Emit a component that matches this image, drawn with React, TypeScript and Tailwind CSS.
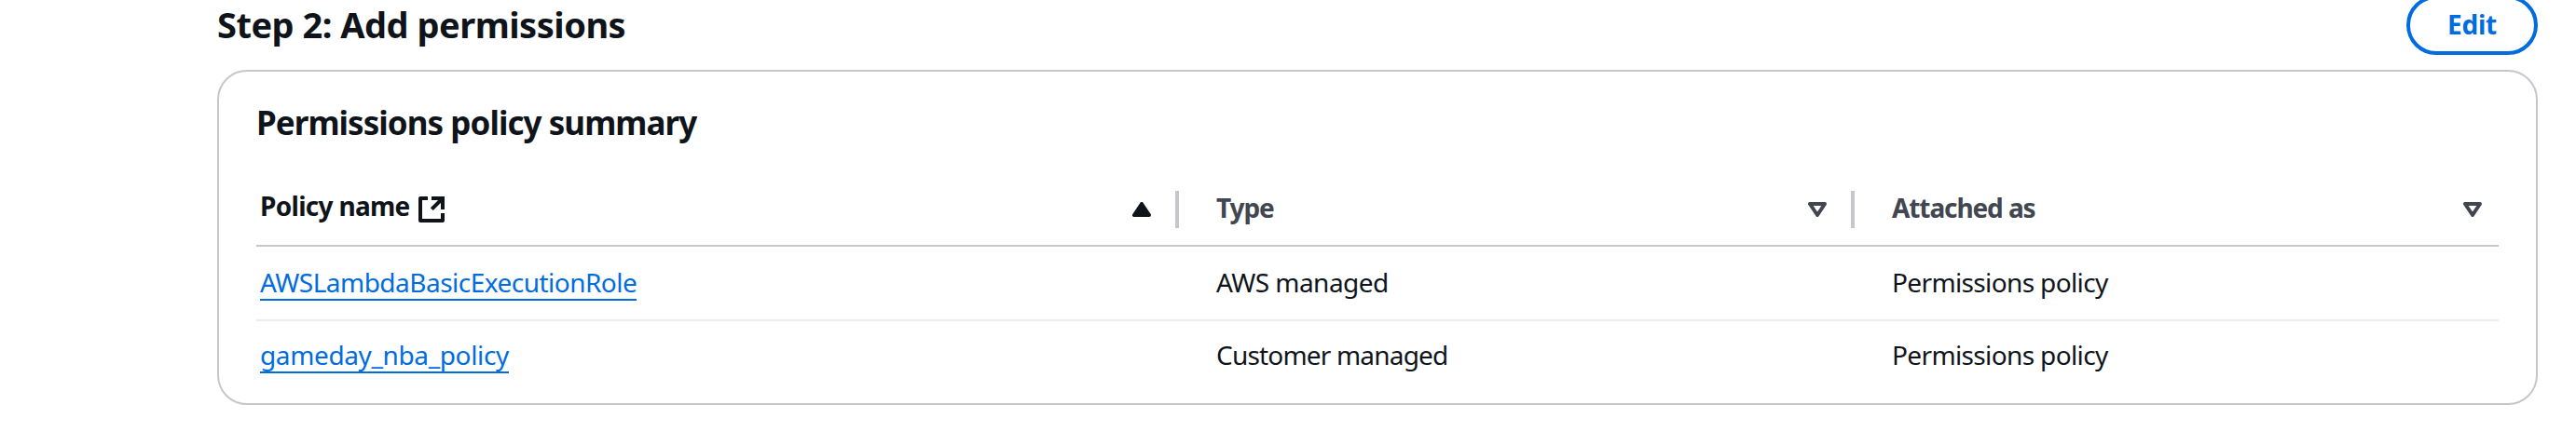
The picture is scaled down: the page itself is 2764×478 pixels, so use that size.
const rows = [
  { name: "AWSLambdaBasicExecutionRole", nameTracking: "tracking-[-0.515px]", type: "AWS managed", typeTracking: "tracking-[-0.54px]", attached: "Permissions policy", rowClass: "h-[80px] pt-[18px] border-b-2 border-[#ebebf0]" },
  { name: "gameday_nba_policy", nameTracking: "tracking-[-0.37px]", type: "Customer managed", typeTracking: "tracking-[-0.81px]", attached: "Permissions policy", rowClass: "h-[88px] pt-[16px]" },
];

function ExternalIcon() {
  return (
    <svg className="mt-[10px] ml-[10px] h-[28px] w-[28px] shrink-0" viewBox="0 0 28 28" fill="none" stroke="#0f141a" strokeWidth="4">
      <path d="M10 2H2v24h24v-8" strokeLinejoin="round" />
      <path d="M14 2h12v12" />
      <path d="M26 2 14.3 13.7" />
    </svg>
  );
}

function SortIcon({ active = false }: { active?: boolean }) {
  return (
    <svg
      className="mt-[16px] ml-auto h-[16px] w-[20px] shrink-0"
      viewBox="0 0 20 16"
      fill={active ? "#0f141a" : "none"}
      stroke={active ? "#0f141a" : "#424650"}
      strokeWidth="4"
      strokeLinejoin="round"
    >
      <path d={active ? "M2 14h16L10 2z" : "M2 2h16l-8 12z"} />
    </svg>
  );
}

function Divider() {
  return <div className="mt-[4px] ml-[26px] h-[40px] w-[4px] shrink-0 bg-[#c6c6cd]" />;
}

export default function App() {
  return (
    <div className="h-[478px] w-[2764px] overflow-hidden bg-white pr-[41px] pl-[233px] font-['Noto_Sans',sans-serif] text-[28px] leading-[40px] text-[#0f141a]">
      <header className="flex h-[59px] items-start justify-between">
        <h1 className="pt-[2px] text-[38px] leading-[48px] font-bold tracking-[-0.5px]">Step 2: Add permissions</h1>
        <button className="-mt-[5px] flex h-[64px] w-[141px] items-center justify-center rounded-full border-4 border-[#006ce0] pb-[2px] font-bold tracking-[-0.2px] text-[#006ce0]">
          Edit
        </button>
      </header>
      <section className="mt-[16px] h-[360px] rounded-[32px] border-2 border-[#c6c6cd] px-[40px] pt-[33px]">
        <h2 className="text-[35px] leading-[44px] font-bold tracking-[-0.95px]">Permissions policy summary</h2>
        <div className="mt-[47px] grid h-[64px] grid-cols-[990px_725px_691px] border-b-2 border-[#c6c6cd] font-bold text-[#424650]">
          <div className="flex items-start pl-[4px] text-[#0f141a]">
            <span className="w-[160px] tracking-[-0.7px] whitespace-nowrap">Policy name</span>
            <ExternalIcon />
            <SortIcon active />
            <Divider />
          </div>
          <div className="flex items-start pl-[40px]">
            <span className="pt-[2px] tracking-[-1.1px]">Type</span>
            <SortIcon />
            <Divider />
          </div>
          <div className="flex items-start pr-[18px] pl-[40px]">
            <span className="pt-[2px] tracking-[-1.1px]">Attached as</span>
            <SortIcon />
          </div>
        </div>
        {rows.map((row) => (
          <div key={row.name} className={`grid grid-cols-[990px_725px_691px] items-start ${row.rowClass}`}>
            <div className="flex pl-[4px]">
              <a href="#" className={`block h-[40px] border-b-2 border-[#006ce0] text-[#006ce0] ${row.nameTracking}`}>
                {row.name}
              </a>
            </div>
            <div className={`pl-[40px] ${row.typeTracking}`}>{row.type}</div>
            <div className="pl-[40px] tracking-[-0.63px]">{row.attached}</div>
          </div>
        ))}
      </section>
    </div>
  );
}
